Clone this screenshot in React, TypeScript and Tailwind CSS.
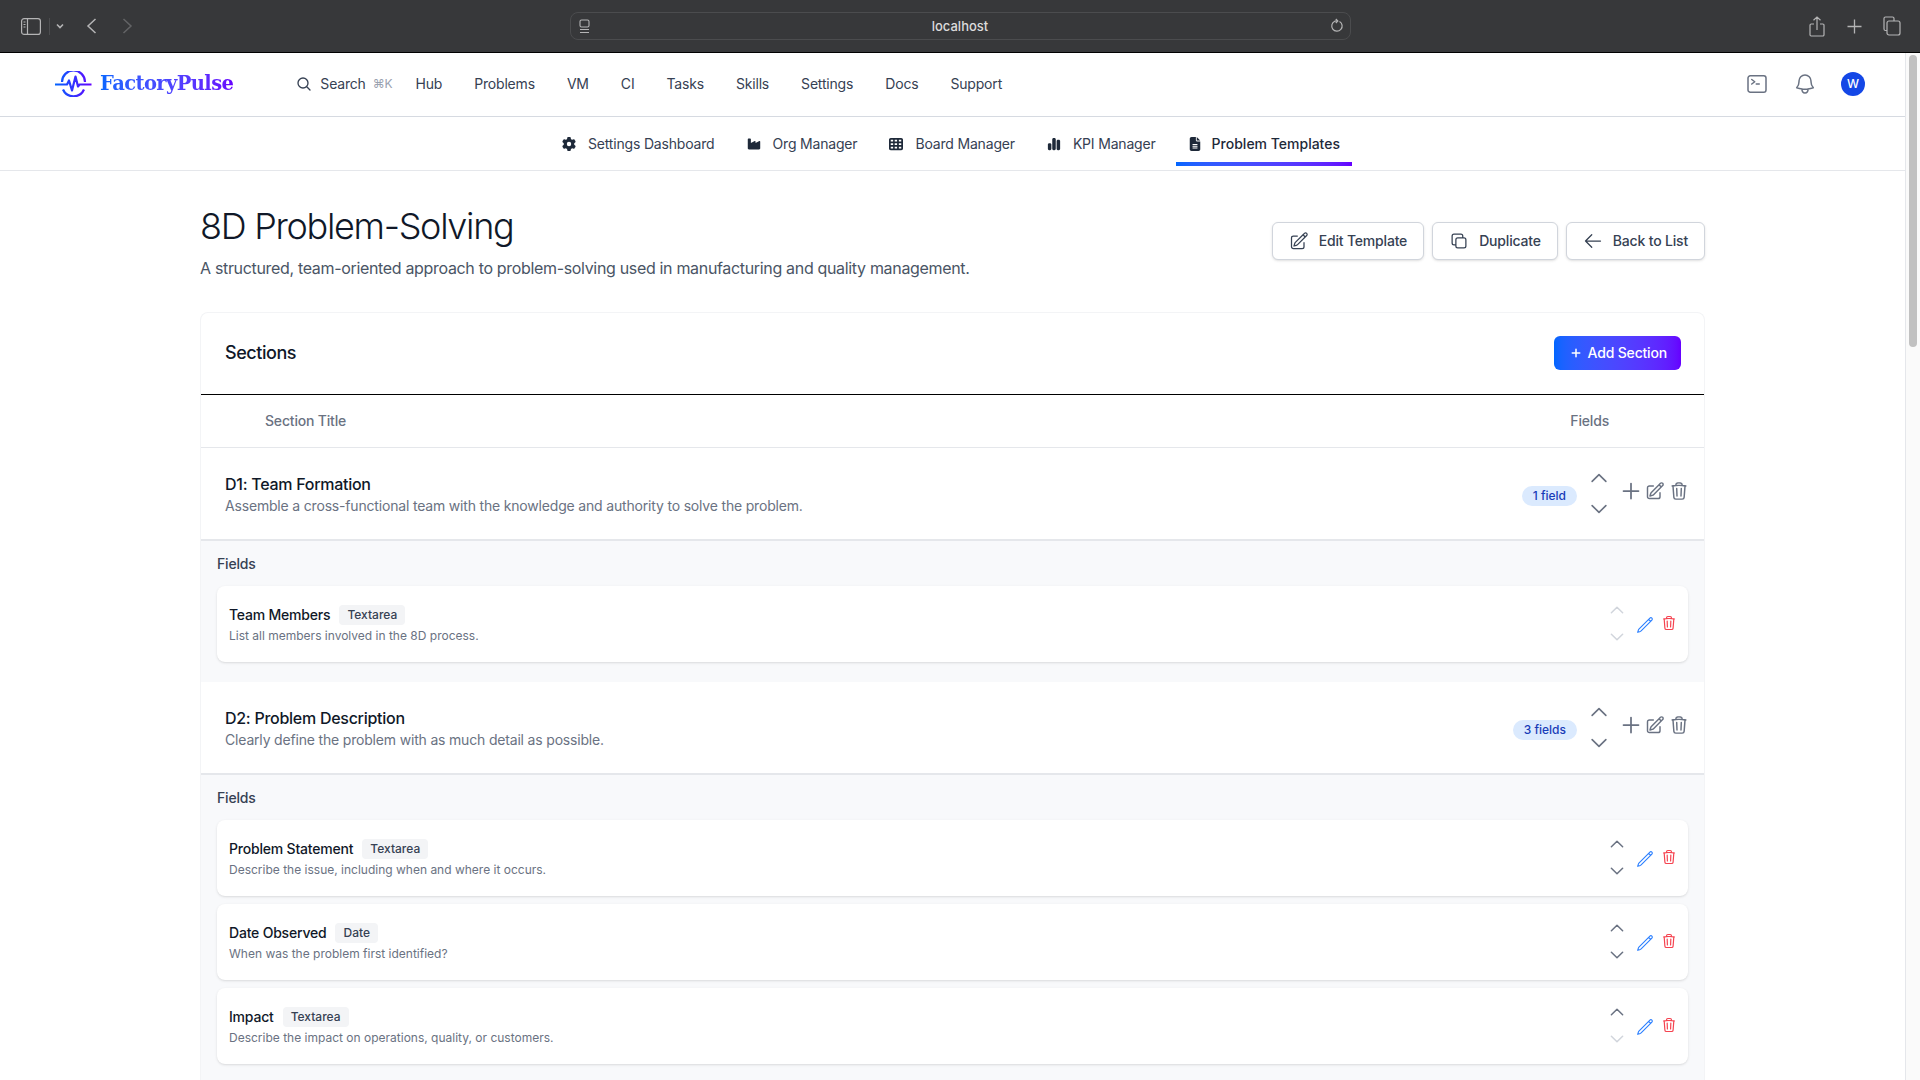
import { FaGear, FaIndustry, FaTableCells, FaChartSimple, FaFileLines } from 'react-icons/fa6'
import {
  HiOutlineMagnifyingGlass,
  HiOutlineCommandLine,
  HiOutlineBell,
  HiOutlinePencilSquare,
  HiOutlineSquare2Stack,
  HiOutlineArrowLeft,
  HiOutlinePlus,
  HiOutlineChevronUp,
  HiOutlineChevronDown,
  HiOutlineTrash,
  HiOutlinePencil,
} from 'react-icons/hi2'

interface Field {
  name: string
  type: string
  description: string
  upDisabled?: boolean
  downDisabled?: boolean
}

interface Section {
  title: string
  description: string
  badge: string
  fields: Field[]
}

const NAV_ITEMS = ['Hub', 'Problems', 'VM', 'CI', 'Tasks', 'Skills', 'Settings', 'Docs', 'Support']

const TABS = [
  { label: 'Settings Dashboard', icon: FaGear },
  { label: 'Org Manager', icon: FaIndustry },
  { label: 'Board Manager', icon: FaTableCells },
  { label: 'KPI Manager', icon: FaChartSimple },
  { label: 'Problem Templates', icon: FaFileLines, active: true },
]

const SECTIONS: Section[] = [
  {
    title: 'D1: Team Formation',
    description: 'Assemble a cross-functional team with the knowledge and authority to solve the problem.',
    badge: '1 field',
    fields: [
      {
        name: 'Team Members',
        type: 'Textarea',
        description: 'List all members involved in the 8D process.',
        upDisabled: true,
        downDisabled: true,
      },
    ],
  },
  {
    title: 'D2: Problem Description',
    description: 'Clearly define the problem with as much detail as possible.',
    badge: '3 fields',
    fields: [
      {
        name: 'Problem Statement',
        type: 'Textarea',
        description: 'Describe the issue, including when and where it occurs.',
      },
      { name: 'Date Observed', type: 'Date', description: 'When was the problem first identified?' },
      {
        name: 'Impact',
        type: 'Textarea',
        description: 'Describe the impact on operations, quality, or customers.',
        downDisabled: true,
      },
    ],
  },
]

const OUTLINE_BUTTON =
  'flex h-[38px] items-center gap-[10px] rounded-md border border-gray-300 bg-white px-4 text-sm font-medium tracking-[-0.18px] text-gray-700 shadow-sm'

function SafariBar() {
  return (
    <div className="relative flex h-[53px] shrink-0 items-center border-b border-black bg-[#37383a] text-[#b4b4b5]">
      <svg width="20" height="17" viewBox="0 0 20 17" fill="none" stroke="currentColor" strokeWidth="1.2" className="ml-[21px]">
        <rect x="0.6" y="0.6" width="18.8" height="15.8" rx="2.5" />
        <path d="M6.5 1v15M2.5 4h2M2.5 6.5h2M2.5 9h2" />
      </svg>
      <div className="ml-[8px] h-[17px] w-px bg-[#4c4d4f]" />
      <svg width="8" height="6" viewBox="0 0 8 6" fill="none" stroke="currentColor" strokeWidth="1.6" className="ml-[6px]">
        <path d="M1 1.5l3 3 3-3" />
      </svg>
      <svg width="11" height="16" viewBox="0 0 11 16" fill="none" stroke="currentColor" strokeWidth="1.5" className="ml-[22px]">
        <path d="M9.5 1L2 8l7.5 7" />
      </svg>
      <svg width="11" height="16" viewBox="0 0 11 16" fill="none" stroke="#636466" strokeWidth="1.5" className="ml-[25px]">
        <path d="M1.5 1L9 8l-7.5 7" />
      </svg>

      <div className="absolute left-[570px] top-[12px] flex h-[28px] w-[781px] items-center justify-between rounded-lg border border-[#4b4c4e] pl-[8px] pr-[6px]">
        <svg width="11" height="15" viewBox="0 0 11 15" fill="none" stroke="currentColor" strokeWidth="1.1">
          <rect x="1" y="1" width="9" height="7" rx="1.5" />
          <path d="M1 10.5h9M1 13.5h9" />
        </svg>
        <span className="pt-px text-[13px] font-medium text-[#dcdcdc]">localhost</span>
        <svg width="14" height="16" viewBox="0 0 14 16" fill="none" stroke="currentColor" strokeWidth="1.2">
          <path d="M9.5 3.4A5.2 5.2 0 1 1 4.8 3.2L7 2.8" />
          <path d="M5.8 1l2 2-2 2" />
        </svg>
      </div>

      <div className="ml-auto flex items-center text-[#b4b4b5]">
        <svg width="16" height="21" viewBox="0 0 16 21" fill="none" stroke="currentColor" strokeWidth="1.2" className="mr-[22px]">
          <path d="M8 14V1M4.5 4.2L8 1l3.5 3.2M5 8H2.2A1.2 1.2 0 0 0 1 9.2v9.6A1.2 1.2 0 0 0 2.2 20h11.6a1.2 1.2 0 0 0 1.2-1.2V9.2A1.2 1.2 0 0 0 13.8 8H11" />
        </svg>
        <svg width="15" height="15" viewBox="0 0 15 15" fill="none" stroke="currentColor" strokeWidth="1.3" className="mr-[21px]">
          <path d="M7.5 0.5v14M0.5 7.5h14" />
        </svg>
        <svg width="18" height="20" viewBox="0 0 18 20" fill="none" stroke="currentColor" strokeWidth="1.2" className="mr-[19px]">
          <path d="M4 14.5H2.5A1.5 1.5 0 0 1 1 13V2.5A1.5 1.5 0 0 1 2.5 1h7A1.5 1.5 0 0 1 11 2.5V5" />
          <rect x="4" y="5" width="13" height="14" rx="2" />
        </svg>
      </div>
    </div>
  )
}

function Logo() {
  return (
    <div className="flex items-center gap-[8px]">
      <svg width="37" height="26" viewBox="0 0 37 26" fill="none" strokeWidth="2.2">
        <defs>
          <linearGradient id="logoGrad" x1="0" y1="0" x2="37" y2="0" gradientUnits="userSpaceOnUse">
            <stop offset="0" stopColor="#0066ff" />
            <stop offset="1" stopColor="#6600ff" />
          </linearGradient>
        </defs>
        <path d="M7 11a11.5 11.5 0 0 1 23 0" stroke="url(#logoGrad)" />
        <path d="M8 18.5a11.5 11.5 0 0 0 21 0" stroke="url(#logoGrad)" />
        <path d="M0 13.5h12l2-4 3 10 3.5-14 2.5 10 1.5-2h12" stroke="url(#logoGrad)" strokeLinejoin="round" />
      </svg>
      <span className="bg-gradient-to-r from-[#0066ff] to-[#6600ff] bg-clip-text font-['DejaVu_Serif',serif] text-[19.5px] font-bold tracking-[-0.6px] text-transparent">
        FactoryPulse
      </span>
    </div>
  )
}

function TopNav() {
  return (
    <header className="flex h-[64px] shrink-0 items-center border-b border-[#d6dae1] bg-white pb-[2px] pl-[55px]">
      <Logo />
      <div className="ml-[63px] flex items-center text-sm tracking-[-0.18px] text-gray-700">
        <HiOutlineMagnifyingGlass size={16} strokeWidth={2} className="text-gray-700" />
        <span className="ml-[8px]">Search</span>
        <span className="ml-[7px] text-xs text-gray-400">⌘K</span>
      </div>
      <nav className="ml-[23px] flex items-center gap-[32px] text-sm tracking-[-0.18px] text-gray-700">
        {NAV_ITEMS.map((item) => (
          <span key={item}>{item}</span>
        ))}
      </nav>
      <div className="ml-auto flex items-center gap-[24px] pr-[40px] text-gray-500">
        <HiOutlineCommandLine size={24} />
        <HiOutlineBell size={24} />
        <div className="flex h-6 w-6 items-center justify-center rounded-full bg-blue-700 text-xs font-medium text-white">W</div>
      </div>
    </header>
  )
}

function SubNav() {
  return (
    <div className="flex h-[54px] shrink-0 justify-center gap-[8px] border-b border-gray-200 bg-white pb-[4px] pr-[3px]">
      {TABS.map((tab) => {
        const Icon = tab.icon
        return (
          <div
            key={tab.label}
            className={
              tab.active
                ? 'relative flex items-center gap-[10px] px-[12px] pt-[5px] text-sm font-medium text-gray-800'
                : 'flex items-center gap-[12px] px-[12px] pt-[5px] text-sm tracking-[-0.18px] text-gray-700'
            }
          >
            <Icon size={14} className="text-gray-800" />
            {tab.label}
            {tab.active && (
              <div className="absolute inset-x-0 bottom-0 h-[4px] bg-gradient-to-r from-[#0066ff] to-[#6600ff]" />
            )}
          </div>
        )
      })}
    </div>
  )
}

function FieldCard({ field }: { field: Field }) {
  return (
    <div className="flex h-[76px] items-center justify-between rounded-lg bg-white pl-[12px] pr-[11px] shadow-sm">
      <div>
        <div className="flex items-center gap-[9px]">
          <span className="text-sm font-medium tracking-[-0.2px] text-gray-900">{field.name}</span>
          <span className="rounded bg-gray-100 px-[8px] py-[2px] text-xs font-medium text-gray-700">{field.type}</span>
        </div>
        <p className="mt-[3px] text-xs text-gray-500">{field.description}</p>
      </div>
      <div className="mb-[1px] flex items-center">
        <div className="flex flex-col items-center gap-[9px]">
          <HiOutlineChevronUp size={18} strokeWidth={2} className={field.upDisabled ? 'text-gray-300' : 'text-gray-500'} />
          <HiOutlineChevronDown size={18} strokeWidth={2} className={field.downDisabled ? 'text-gray-300' : 'text-gray-500'} />
        </div>
        <HiOutlinePencil size={18} strokeWidth={1.5} className="ml-[10px] mt-[2px] text-blue-500" />
        <HiOutlineTrash size={16} strokeWidth={1.75} className="ml-[7px] mt-[-2px] text-[#f5424f]" />
      </div>
    </div>
  )
}

function SectionBlock({ section }: { section: Section }) {
  return (
    <div>
      <div className="flex h-[93px] items-center justify-between border-b-2 border-gray-200 bg-white pl-[24px] pr-[15px]">
        <div>
          <h3 className="pt-px text-base font-medium tracking-[-0.27px] text-gray-900">{section.title}</h3>
          <p className="text-sm tracking-[-0.18px] text-gray-500">{section.description}</p>
        </div>
        <div className="flex items-center">
          <span className="mt-[5px] rounded-full bg-blue-100 px-[11px] py-[2px] text-xs font-medium text-blue-800">
            {section.badge}
          </span>
          <div className="ml-[11px] flex flex-col items-center gap-[9px] text-gray-500">
            <HiOutlineChevronUp size={22} strokeWidth={1.75} />
            <HiOutlineChevronDown size={22} strokeWidth={1.75} />
          </div>
          <div className="mb-[6px] ml-[9px] flex items-center gap-[2px] text-gray-500">
            <HiOutlinePlus size={24} strokeWidth={1.75} />
            <HiOutlinePencilSquare size={20} strokeWidth={1.75} />
            <HiOutlineTrash size={20} strokeWidth={1.75} className="ml-[2px]" />
          </div>
        </div>
      </div>
      <div className="bg-[#f8f9fb] px-[16px] pb-[20px] pt-[13px]">
        <h4 className="mb-[12px] text-sm font-medium tracking-[-0.18px] text-gray-700">Fields</h4>
        <div className="flex flex-col gap-[8px]">
          {section.fields.map((field) => (
            <FieldCard key={field.name} field={field} />
          ))}
        </div>
      </div>
    </div>
  )
}

export default function App() {
  return (
    <div className="flex h-screen w-screen flex-col overflow-hidden bg-white font-[Inter,sans-serif]">
      <SafariBar />
      <div className="flex min-h-0 flex-1">
        <div className="min-w-0 flex-1 overflow-hidden">
          <TopNav />
          <SubNav />
          <main className="mx-auto max-w-[1505px] pt-[35px]">
            <div className="mb-[32px] flex items-center justify-between">
              <div>
                <h1 className="text-4xl font-light tracking-[-1.3px] text-gray-900">8D Problem-Solving</h1>
                <p className="mt-[10px] text-base tracking-[-0.33px] text-gray-600">
                  A structured, team-oriented approach to problem-solving used in manufacturing and quality management.
                </p>
              </div>
              <div className="mb-[4px] flex gap-[8px]">
                <button className={OUTLINE_BUTTON}>
                  <HiOutlinePencilSquare size={20} />
                  Edit Template
                </button>
                <button className={OUTLINE_BUTTON}>
                  <HiOutlineSquare2Stack size={20} />
                  Duplicate
                </button>
                <button className={OUTLINE_BUTTON}>
                  <HiOutlineArrowLeft size={20} />
                  Back to List
                </button>
              </div>
            </div>

            <div className="rounded-t-lg border-x border-t border-gray-100 bg-white">
              <div className="flex h-[82px] items-center justify-between border-b border-black pb-[2px] pl-[24px] pr-[23px]">
                <h2 className="text-lg font-medium tracking-[-0.45px] text-gray-900">Sections</h2>
                <button className="flex h-[34px] items-center gap-[6px] rounded-md bg-gradient-to-r from-[#0066ff] to-[#6600ff] pl-[16px] pr-[14px] text-sm font-medium tracking-[-0.18px] text-white">
                  <HiOutlinePlus size={12} strokeWidth={3} />
                  Add Section
                </button>
              </div>
              <div className="flex h-[53px] items-center justify-between border-b border-gray-200 pl-[64px] pr-[95px] text-sm font-medium tracking-[-0.18px] text-gray-500">
                <span>Section Title</span>
                <span>Fields</span>
              </div>
              {SECTIONS.map((section) => (
                <SectionBlock key={section.title} section={section} />
              ))}
            </div>
          </main>
        </div>
        <div className="w-[15px] shrink-0 border-l border-gray-200 bg-[#fafafa] pl-[3px] pr-[3px] pt-[2px]">
          <div className="h-[292px] w-full rounded-full bg-[#c1c1c1]" />
        </div>
      </div>
    </div>
  )
}
